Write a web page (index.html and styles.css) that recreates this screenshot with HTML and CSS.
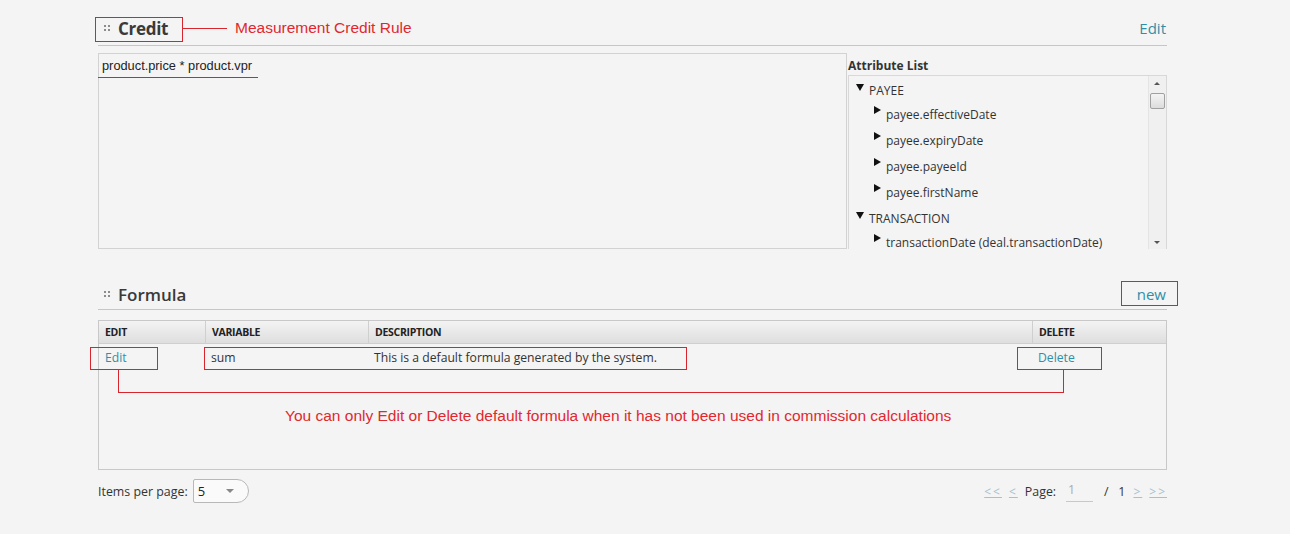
FILE: index.html
```html
<!DOCTYPE html>
<html>
<head>
<meta charset="utf-8">
<link rel="stylesheet" href="styles.css">
</head>
<body>
<div class="page">
  <section class="sec">
    <div class="sec-head credit-head">
      <div class="title"><span class="grip"><i></i><i></i><i></i><i></i></span><span class="title-text bold">Credit</span></div>
      <a class="link head-link">Edit</a>
    </div>
    <div class="credit-body">
      <div class="editor"><span class="expr">product.price * product.vpr</span></div>
      <div class="attrs">
        <div class="attrs-label">Attribute List</div>
        <div class="tree">
          <ul class="tree-list">
            <li class="group"><span class="tri down"></span>PAYEE</li>
            <li class="leaf"><span class="tri right"></span>payee.effectiveDate</li>
            <li class="leaf"><span class="tri right"></span>payee.expiryDate</li>
            <li class="leaf"><span class="tri right"></span>payee.payeeId</li>
            <li class="leaf"><span class="tri right"></span>payee.firstName</li>
            <li class="group"><span class="tri down"></span>TRANSACTION</li>
            <li class="leaf"><span class="tri right"></span>transactionDate (deal.transactionDate)</li>
          </ul>
          <div class="scrollbar">
            <span class="sb-up"></span>
            <span class="sb-thumb"></span>
            <span class="sb-down"></span>
          </div>
        </div>
      </div>
    </div>
  </section>

  <section class="sec formula">
    <div class="sec-head formula-head">
      <div class="title"><span class="grip"><i></i><i></i><i></i><i></i></span><span class="title-text semi">Formula</span></div>
      <a class="link head-link">new</a>
    </div>
    <div class="grid">
      <div class="grid-head">
        <div class="c c-edit">EDIT</div>
        <div class="c c-var">VARIABLE</div>
        <div class="c c-desc">DESCRIPTION</div>
        <div class="c c-del">DELETE</div>
      </div>
      <div class="grid-row">
        <div class="c c-edit"><a class="link">Edit</a></div>
        <div class="c c-var">sum</div>
        <div class="c c-desc">This is a default formula generated by the system.</div>
        <div class="c c-del"><a class="link">Delete</a></div>
      </div>
    </div>
    <div class="footer">
      <div class="per-page">
        <span>Items per page:</span>
        <span class="select"><span>5</span><span class="caret"></span></span>
      </div>
      <div class="pager">
        <span class="pg dim">&lt;&lt;</span>
        <span class="pg dim">&lt;</span>
        <span class="pg-label">Page:</span>
        <span class="pg-input">1</span>
        <span class="pg-total">/&nbsp;&nbsp;&nbsp;1</span>
        <span class="pg dim">&gt;</span>
        <span class="pg dim">&gt;&gt;</span>
      </div>
    </div>
  </section>

  <!-- annotations overlay -->
  <div class="ann box-credit"></div>
  <div class="ann line-credit"></div>
  <div class="ann-text note-credit">Measurement Credit Rule</div>
  <div class="ann underline-expr"></div>
  <div class="ann box-new"></div>
  <div class="ann box-edit"></div>
  <div class="ann box-vardesc"></div>
  <div class="ann box-delete"></div>
  <div class="ann connector"></div>
  <div class="ann-text note-formula">You can only Edit or Delete default formula when it has not been used in commission calculations</div>
</div>
</body>
</html>
```

FILE: styles.css
```css
html, body {
  margin: 0;
  padding: 0;
  background: #f4f4f4;
}
body {
  font-family: "Open Sans", "Noto Sans", sans-serif;
  color: #333;
  font-size: 12px;
}
.page {
  position: relative;
  width: 1069px;
  margin-left: 98px;
  height: 534px;
}
.sec-head {
  box-sizing: border-box;
  height: 46px;
  display: flex;
  align-items: center;
  justify-content: space-between;
  border-bottom: 1px solid #c6c6c6;
  padding-top: 11px;
}
.formula {
  margin-top: 16px;
}
.formula-head {
  padding-top: 14px;
  height: 45px;
}
.title {
  display: flex;
  align-items: center;
}
.grip {
  display: grid;
  grid-template-columns: 2px 2px;
  grid-template-rows: 2px 2px;
  gap: 2px;
  margin: 0 8px 0 6px;
}
.grip i {
  background: #8c8c8c;
  display: block;
}
.title-text {
  font-size: 17px;
  color: #3a3a3a;
}
.bold { font-weight: 700; letter-spacing: -0.3px; }
.semi { font-weight: 600; }
.link {
  color: #2f8fa8;
  text-decoration: none;
}
.head-link {
  font-size: 15px;
  margin-right: 1px;
}
.credit-body {
  display: flex;
  margin-top: 7px;
  height: 196px;
}
.editor {
  box-sizing: border-box;
  width: 749px;
  height: 196px;
  border: 1px solid #d2d2d2;
  padding: 4px 3px;
  font-family: "Liberation Sans", Arial, sans-serif;
  font-size: 12.8px;
  color: #222;
}
.attrs {
  flex: 1;
  display: flex;
  flex-direction: column;
  padding-left: 1px;
}
.attrs-label {
  font-weight: 700;
  font-size: 12px;
  color: #333;
  padding-top: 4px;
  height: 18px;
}
.tree {
  flex: 1;
  display: flex;
  border: 1px solid #d8d8d8;
  border-bottom: none;
  overflow: hidden;
}
.tree-list {
  list-style: none;
  margin: 0;
  padding: 5px 0 0 0;
  flex: 1;
  font-size: 12px;
  color: #333;
}
.tree-list li {
  line-height: 20px;
  display: flex;
  align-items: flex-start;
  white-space: nowrap;
}
.tree-list .group {
  padding-left: 7px;
  height: 24px;
}
.tree-list .leaf {
  padding-left: 25px;
  height: 26px;
}
.tri {
  width: 0;
  height: 0;
  display: inline-block;
}
.tri.down {
  border-left: 4px solid transparent;
  border-right: 4px solid transparent;
  border-top: 7px solid #111;
  margin-right: 5px;
  margin-top: 3px;
}
.tri.right {
  border-top: 4px solid transparent;
  border-bottom: 4px solid transparent;
  border-left: 7px solid #111;
  margin-right: 5px;
  margin-top: 1px;
}
.scrollbar {
  width: 17px;
  position: relative;
  background: #f0f0f0;
  border-left: 1px solid #e4e4e4;
}
.sb-up, .sb-down {
  position: absolute;
  left: 5px;
  width: 0;
  height: 0;
  border-left: 3px solid transparent;
  border-right: 3px solid transparent;
}
.sb-up {
  top: 6px;
  border-bottom: 3px solid #555;
}
.sb-down {
  bottom: 5px;
  border-top: 3px solid #555;
}
.sb-thumb {
  position: absolute;
  top: 17px;
  left: 1px;
  width: 13px;
  height: 14px;
  border: 1px solid #a0a0a0;
  border-radius: 2px;
  background: linear-gradient(#f4f4f4, #dcdcdc);
}
.grid {
  box-sizing: border-box;
  margin-top: 10px;
  height: 150px;
  border: 1px solid #c8c8c8;
}
.grid-head, .grid-row {
  display: grid;
  grid-template-columns: 106px 163px 664px 1fr;
}
.grid-head {
  height: 22px;
  background: linear-gradient(#f3f3f3, #dedede);
  border-bottom: 1px solid #cfcfcf;
  font-size: 10.5px;
  font-weight: 700;
  color: #222;
  letter-spacing: -0.3px;
}
.grid-head .c {
  border-left: 1px solid #cfcfcf;
  line-height: 22px;
  padding-left: 6px;
}
.grid-head .c:first-child {
  border-left: none;
}
.grid-row {
  height: 26px;
  font-size: 12.2px;
  color: #333;
}
.grid-row .c {
  padding-left: 6px;
  line-height: 26px;
  padding-top: 1px;
}
.footer {
  display: flex;
  justify-content: space-between;
  align-items: center;
  margin-top: 9px;
  height: 24px;
  font-size: 12.4px;
  color: #333;
}
.per-page {
  display: flex;
  align-items: center;
  gap: 5px;
}
.select {
  box-sizing: border-box;
  width: 56px;
  height: 24px;
  border: 1px solid #b8b8b8;
  border-radius: 2px 12px 12px 2px;
  background: #fafafa;
  display: flex;
  align-items: center;
  justify-content: space-between;
  padding: 0 14px 0 4px;
  font-size: 13px;
  color: #222;
}
.caret {
  width: 0;
  height: 0;
  border-left: 4px solid transparent;
  border-right: 4px solid transparent;
  border-top: 4px solid #888;
}
.pager {
  display: flex;
  align-items: center;
  gap: 7px;
}
.pg.dim {
  color: #a8c0cc;
  text-decoration: underline;
  font-size: 12px;
  letter-spacing: 2px;
}
.pg-input {
  box-sizing: border-box;
  width: 27px;
  height: 22px;
  border-bottom: 1px solid #c8c8c8;
  color: #aaa;
  padding-left: 2px;
  margin: 0 4px 0 3px;
  line-height: 20px;
}
.pg-total { margin-right: 1px; }

/* annotations */
.ann {
  position: absolute;
  box-sizing: border-box;
  border: 1px solid #d8242c;
}
.ann-text {
  position: absolute;
  font-family: "Liberation Sans", Arial, sans-serif;
  color: #e0282e;
  font-size: 15.5px;
  white-space: nowrap;
}
.box-credit { left: -3px; top: 17px; width: 88px; height: 25px; }
.line-credit { left: 85px; top: 28px; width: 44px; height: 0; border-width: 1px 0 0 0; }
.note-credit { left: 137px; top: 19px; }
.underline-expr { left: 0px; top: 77px; width: 160px; height: 0; border-width: 1px 0 0 0; }
.box-new { left: 1023px; top: 281px; width: 57px; height: 25px; }
.box-edit { left: -8px; top: 347px; width: 68px; height: 23px; }
.box-vardesc { left: 106px; top: 347px; width: 483px; height: 23px; }
.box-delete { left: 919px; top: 347px; width: 85px; height: 23px; }
.connector { left: 20px; top: 369px; width: 946px; height: 24px; border-top: none; }
.note-formula { left: 187px; top: 407px; }
```
